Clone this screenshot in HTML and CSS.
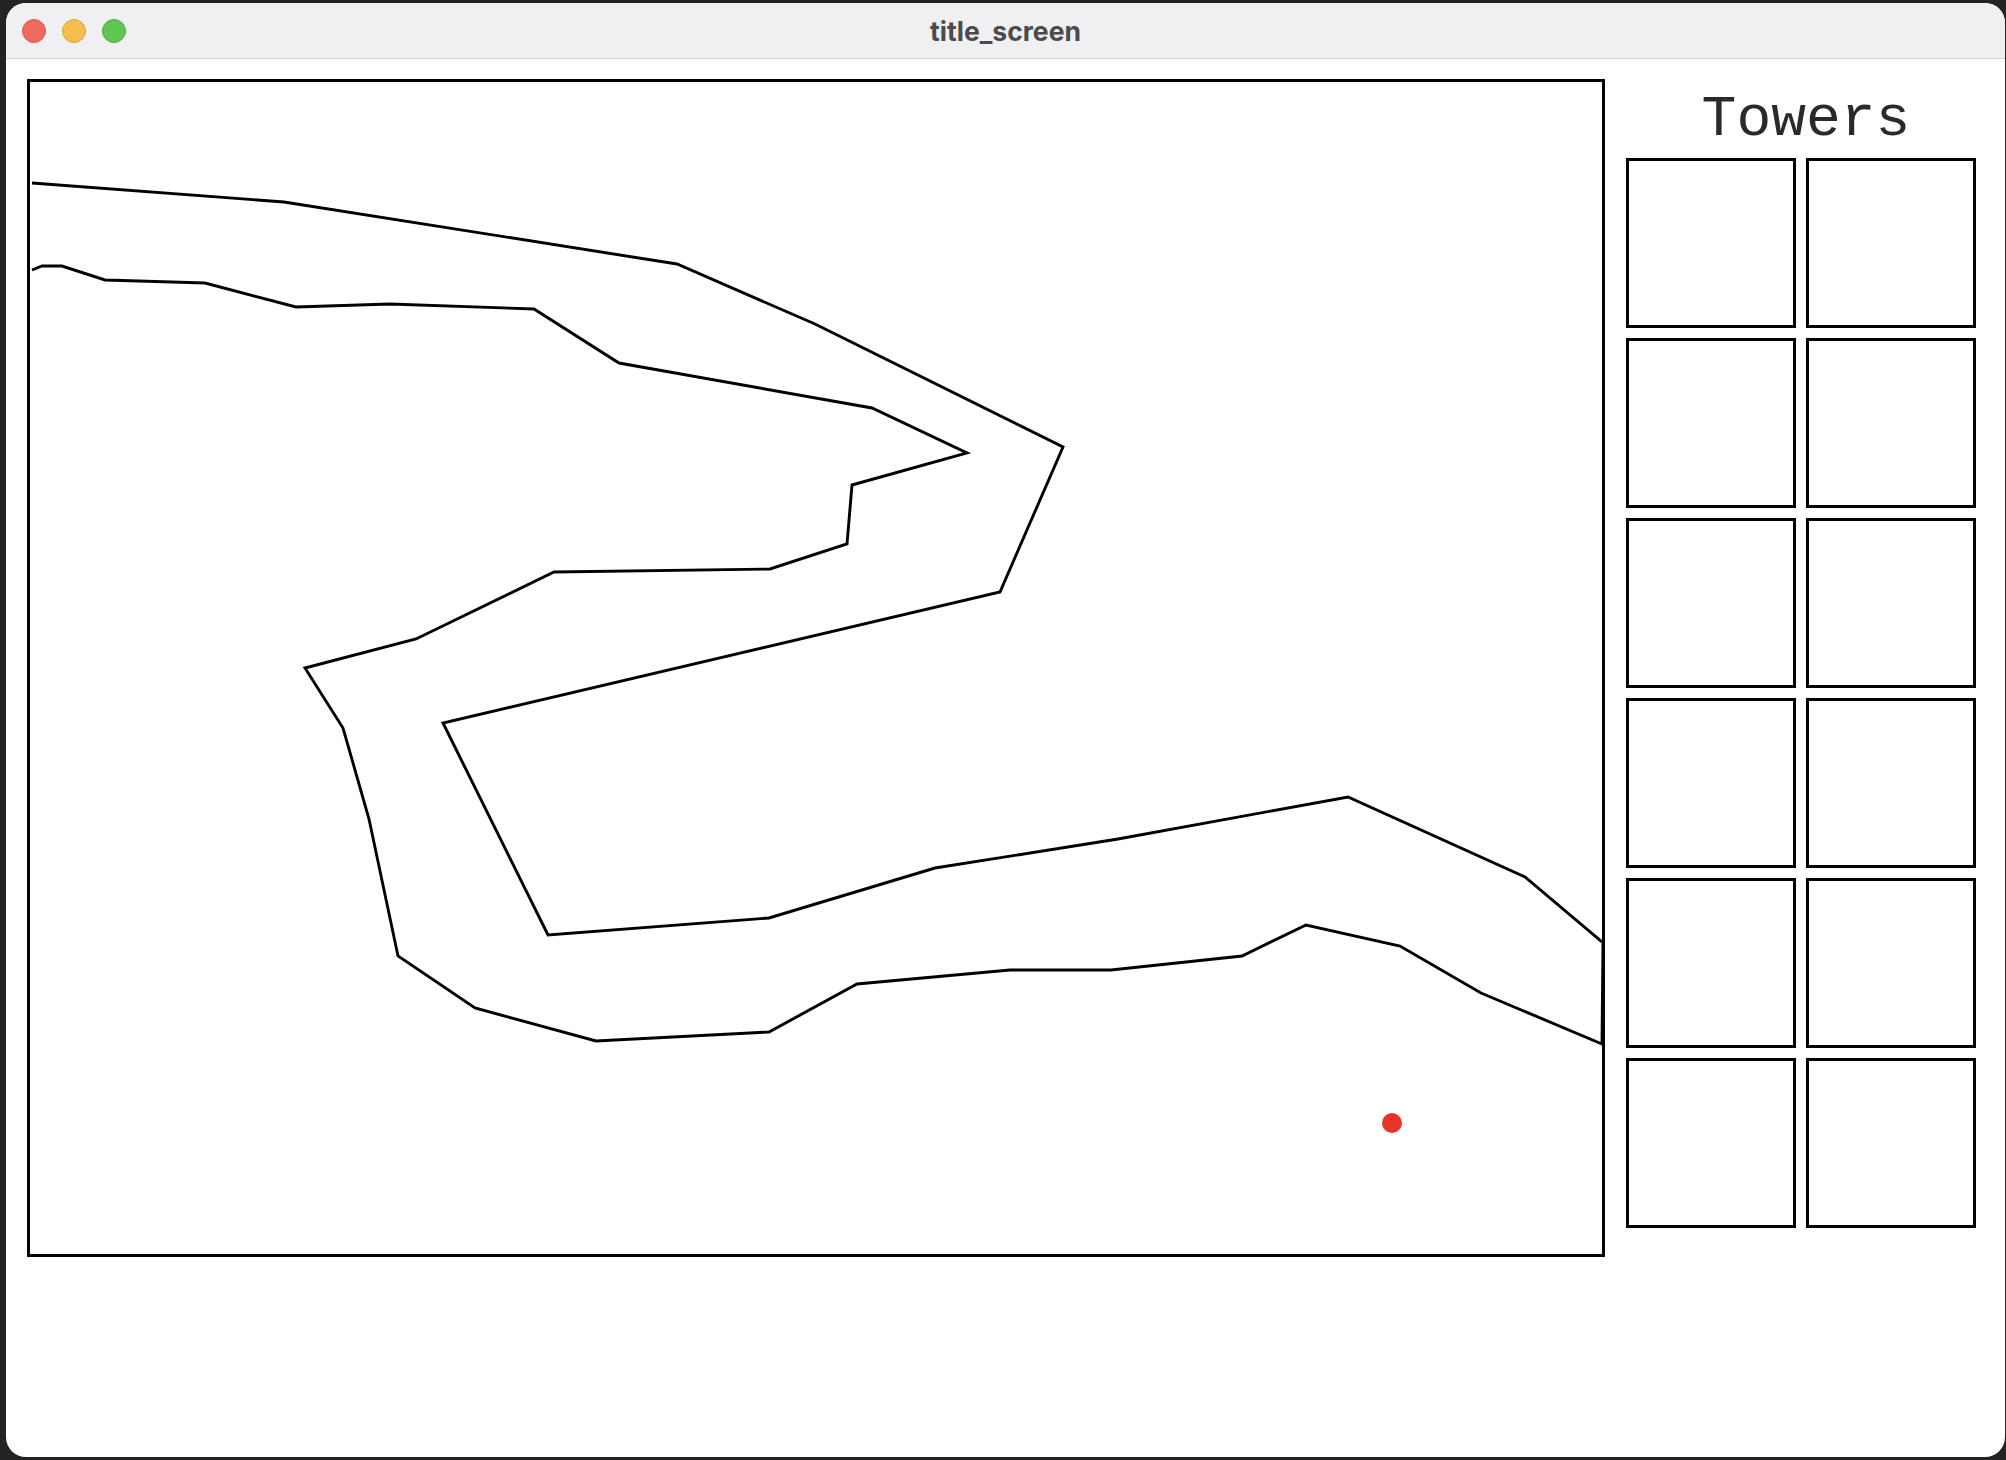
FILE: index.html
```html
<!DOCTYPE html>
<html lang="en">
<head>
<meta charset="utf-8">
<title>title_screen</title>
<link rel="stylesheet" href="styles.css">
</head>
<body>
<div class="window">
  <header class="titlebar">
    <div class="lights">
      <span class="light light-red"></span>
      <span class="light light-yellow"></span>
      <span class="light light-green"></span>
    </div>
    <div class="title">title_screen</div>
    <div class="titlebar-spacer"></div>
  </header>
  <main class="content">
    <div class="game">
      <svg class="map" viewBox="30 82 1572 1172" width="1572" height="1172" xmlns="http://www.w3.org/2000/svg">
        <polyline class="path-edge" points="32,183 284,202 677,264 815,324 1063,447 1000,592 443,723 548,935 769,918 935,868 1118,839 1348,797 1525,877 1602,942"/>
        <polyline class="path-edge" points="32,270 42,266 62,266 105,280 205,283 296,307 390,304 534,309 619,363 872,408 967,453 852,485 847,544 770,569 554,572 416,639 305,668 343,728 369,819 398,956 475,1008 596,1041 769,1032 857,984 1010,970 1111,970 1242,956 1306,925 1400,946 1481,993 1602,1044 1603,942"/>
        <circle class="enemy" cx="1392" cy="1123" r="10"/>
      </svg>
    </div>
    <aside class="sidebar">
      <h1 class="towers-title">Towers</h1>
      <div class="tower-grid">
        <div class="tower-slot"></div>
        <div class="tower-slot"></div>
        <div class="tower-slot"></div>
        <div class="tower-slot"></div>
        <div class="tower-slot"></div>
        <div class="tower-slot"></div>
        <div class="tower-slot"></div>
        <div class="tower-slot"></div>
        <div class="tower-slot"></div>
        <div class="tower-slot"></div>
        <div class="tower-slot"></div>
        <div class="tower-slot"></div>
      </div>
    </aside>
  </main>
</div>
</body>
</html>
```

FILE: styles.css
```css
html, body {
  margin: 0;
  height: 100%;
}

body {
  background: #232323;
  padding: 3px 1px 3px 6px;
  box-sizing: border-box;
  overflow: hidden;
}

.window {
  width: 1999px;
  height: 1454px;
  background: #ffffff;
  border-radius: 20px;
  overflow: hidden;
  display: flex;
  flex-direction: column;
}

.titlebar {
  height: 55px;
  flex: 0 0 55px;
  background: #f0f0f2;
  border-bottom: 1px solid #d6d6d8;
  display: grid;
  grid-template-columns: 1fr auto 1fr;
  align-items: center;
}

.lights {
  display: flex;
  gap: 16px;
  padding-left: 16px;
}

.light {
  width: 24px;
  height: 24px;
  border-radius: 50%;
  box-sizing: border-box;
}

.light-red {
  background: #ee6a5e;
  border: 1px solid #d65a4f;
}

.light-yellow {
  background: #f6be4f;
  border: 1px solid #d9a43d;
}

.light-green {
  background: #61c554;
  border: 1px solid #4fab43;
}

.title {
  font-family: Inter, "Open Sans", "Liberation Sans", sans-serif;
  font-weight: 700;
  font-size: 26.5px;
  color: #4b4b4d;
  letter-spacing: 0;
}

.content {
  flex: 1;
  display: flex;
  align-items: flex-start;
  gap: 21px;
  padding: 20px 0 0 21px;
}

.game {
  width: 1578px;
  height: 1178px;
  border: 3px solid #000;
  box-sizing: border-box;
  flex: 0 0 auto;
}

.map {
  display: block;
}

.path-edge {
  fill: none;
  stroke: #000;
  stroke-width: 2.9;
  stroke-linejoin: miter;
  stroke-miterlimit: 6;
}

.enemy {
  fill: #e63427;
}

.sidebar {
  width: 350px;
  display: flex;
  flex-direction: column;
  gap: 10px;
}

.towers-title {
  margin: 0;
  padding: 12px 0 0 10px;
  font-family: "Liberation Mono", "DejaVu Sans Mono", monospace;
  font-weight: 400;
  font-size: 58px;
  line-height: 57px;
  color: #2a2a2a;
  text-align: center;
}

.tower-grid {
  display: grid;
  grid-template-columns: repeat(2, 170px);
  grid-auto-rows: 170px;
  gap: 10px;
}

.tower-slot {
  border: 3px solid #000;
  box-sizing: border-box;
}
```
